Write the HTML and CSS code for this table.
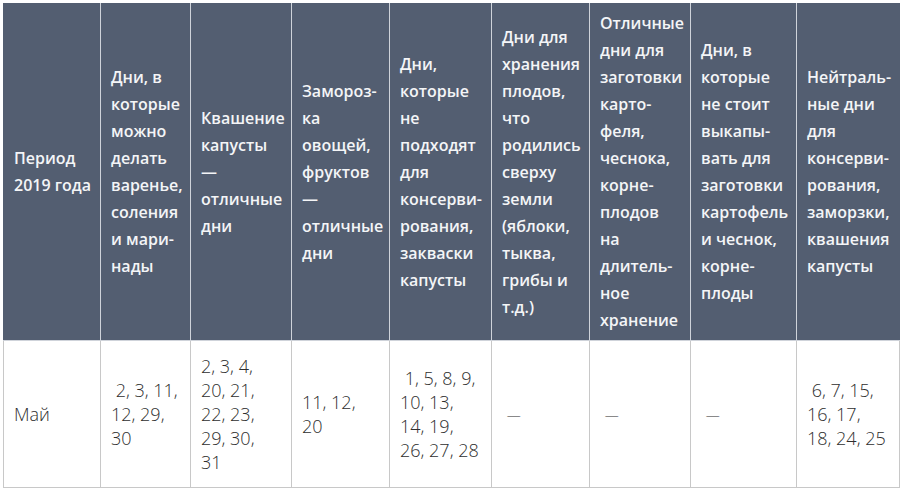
FILE: index.html
```html
<!DOCTYPE html>
<html lang="ru">
<head>
<meta charset="utf-8">
<title>Календарь заготовок</title>
<link rel="stylesheet" href="styles.css">
</head>
<body>
<div class="wrap">
<table class="cal">
<colgroup>
<col class="c1"><col class="c2"><col class="c3"><col class="c4"><col class="c5"><col class="c6"><col class="c7"><col class="c8"><col class="c9">
</colgroup>
<thead>
<tr>
<th>Период<br>2019 года</th>
<th>Дни, в<br>которые<br>можно<br>делать<br>варенье,<br>соления<br>и мари-<br>нады</th>
<th>Квашение<br>капусты<br>—<br>отличные<br>дни</th>
<th>Замороз-<br>ка<br>овощей,<br>фруктов<br>—<br>отличные<br>дни</th>
<th>Дни,<br>которые<br>не<br>подходят<br>для<br>консерви-<br>рования,<br>закваски<br>капусты</th>
<th>Дни для<br>хранения<br>плодов,<br>что<br>родились<br>сверху<br>земли<br>(яблоки,<br>тыква,<br>грибы и<br>т.д.)</th>
<th>Отличные<br>дни для<br>заготовки<br>карто-<br>феля,<br>чеснока,<br>корне-<br>плодов<br>на<br>длитель-<br>ное<br>хранение</th>
<th>Дни, в<br>которые<br>не стоит<br>выкапы-<br>вать для<br>заготовки<br>картофель<br>и чеснок,<br>корне-<br>плоды</th>
<th>Нейтраль-<br>ные дни<br>для<br>консерви-<br>рования,<br>заморзки,<br>квашения<br>капусты</th>
</tr>
</thead>
<tbody>
<tr>
<td>Май</td>
<td>&nbsp;2, 3, 11,<br>12, 29,<br>30</td>
<td>2, 3, 4,<br>20, 21,<br>22, 23,<br>29, 30,<br>31</td>
<td>11, 12,<br>20</td>
<td>&nbsp;1, 5, 8, 9,<br>10, 13,<br>14, 19,<br>26, 27, 28</td>
<td>&nbsp;<span class="dash">—</span></td>
<td>&nbsp;<span class="dash">—</span></td>
<td>&nbsp;<span class="dash">—</span></td>
<td>&nbsp;6, 7, 15,<br>16, 17,<br>18, 24, 25</td>
</tr>
</tbody>
</table>
</div>
</body>
</html>
```

FILE: styles.css
```css
html, body {
  margin: 0;
  padding: 0;
  background: #ffffff;
}

.wrap {
  padding: 3px 0 0 3px;
}

.cal {
  border-collapse: collapse;
  table-layout: fixed;
  width: 896px;
  font-family: "Open Sans", "DejaVu Sans", sans-serif;
}

.c1 { width: 97px; }
.c2 { width: 90px; }
.c3 { width: 101px; }
.c4 { width: 98px; }
.c5 { width: 102px; }
.c6 { width: 98px; }
.c7 { width: 101px; }
.c8 { width: 106px; }
.c9 { width: 103px; }

.cal th {
  background: #535e71;
  color: #f4f5f7;
  font-size: 16px;
  font-weight: 600;
  line-height: 27px;
  text-align: left;
  vertical-align: middle;
  white-space: nowrap;
  padding: 6px 10px;
  height: 324px;
  border: 1px solid #cfd3da;
  border-top-color: #535e71;
}

.cal th:first-child {
  border-left-color: #535e71;
}

.cal th:last-child {
  border-right-color: #535e71;
}

.cal td {
  color: #2e2e2e;
  font-size: 18px;
  font-weight: 300;
  line-height: 24px;
  text-align: left;
  vertical-align: middle;
  white-space: nowrap;
  padding: 6px 10px;
  height: 134px;
  border: 1px solid #c8c8c8;
}

.dash {
  font-size: 14px;
}
```
